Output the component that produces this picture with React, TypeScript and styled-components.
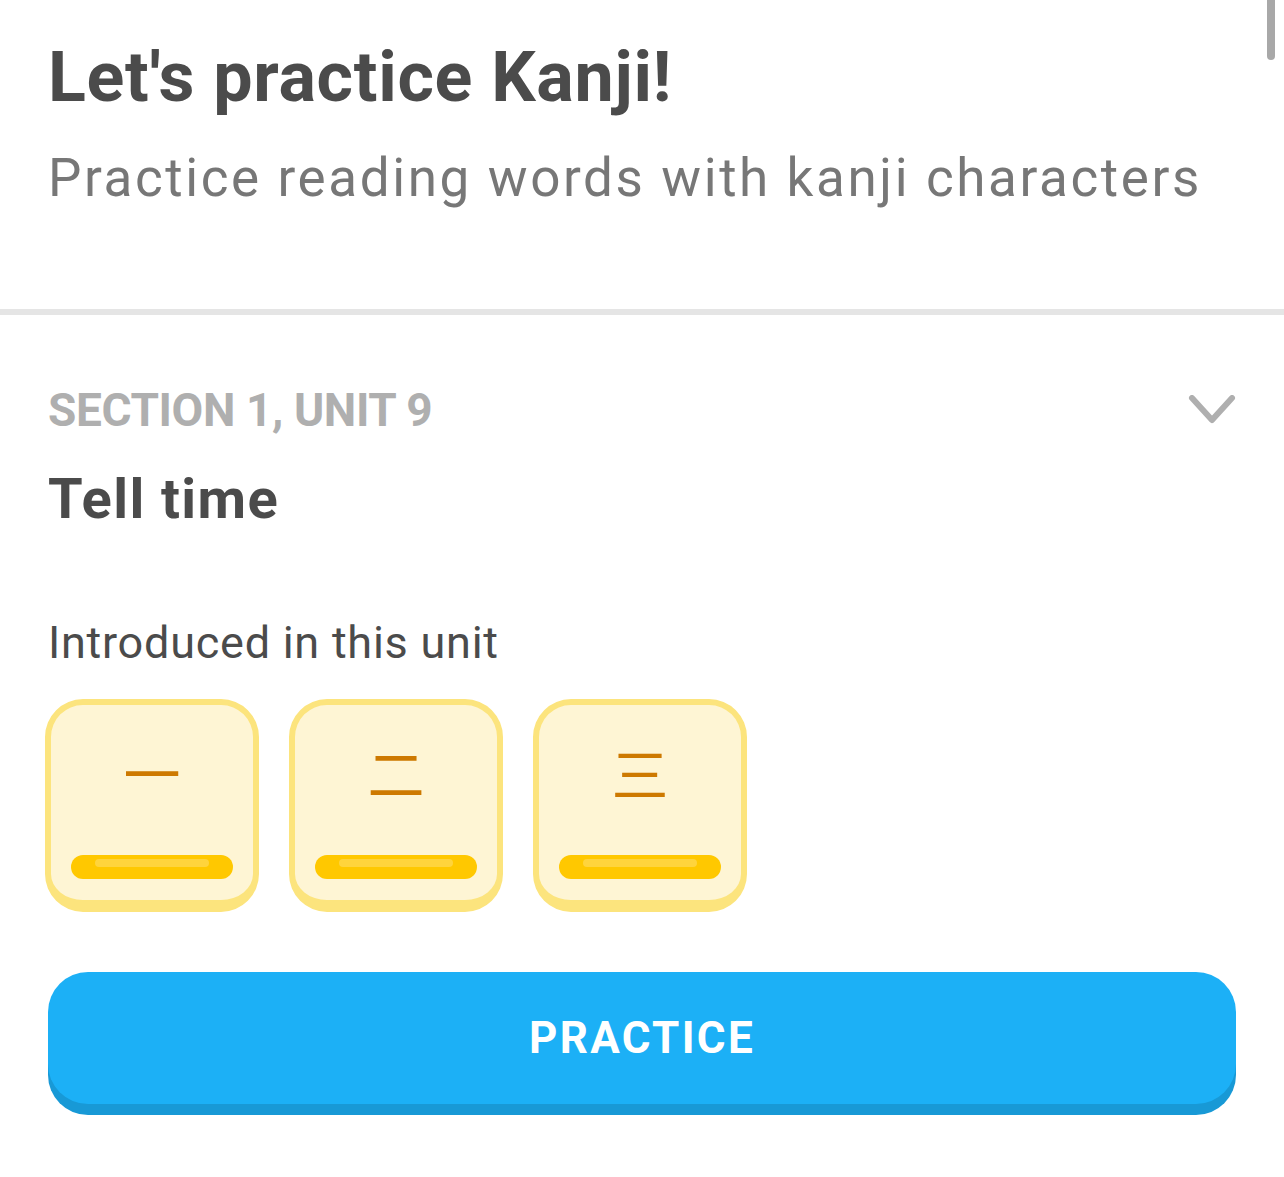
import React from "react";
import styled, { createGlobalStyle } from "styled-components";

const GlobalStyle = createGlobalStyle`
  html, body {
    margin: 0;
    padding: 0;
    background: #ffffff;
  }
  body {
    font-family: Roboto, "Noto Sans", "Liberation Sans", sans-serif;
  }
`;

const Page = styled.div`
  position: relative;
  width: 1284px;
  min-height: 1177px;
  background: #ffffff;
  overflow: hidden;
`;

const ScrollThumb = styled.div`
  position: absolute;
  top: -12px;
  right: 9px;
  width: 8px;
  height: 72px;
  border-radius: 4px;
  background: #a8a8a8;
`;

const Header = styled.header`
  padding: 35px 48px 99px;
`;

const Title = styled.h1`
  margin: 0;
  font-size: 70px;
  line-height: 84px;
  font-weight: 700;
  color: #4b4b4b;
  letter-spacing: 0.7px;
`;

const Subtitle = styled.p`
  margin: 27px 0 0;
  font-size: 53px;
  line-height: 64px;
  font-weight: 400;
  color: #777777;
  letter-spacing: 2.6px;
`;

const Divider = styled.hr`
  margin: 0;
  border: none;
  height: 6px;
  background: #e5e5e5;
`;

const Content = styled.section`
  padding: 67px 48px 60px;
  display: flex;
  flex-direction: column;
`;

const SectionRow = styled.div`
  display: flex;
  align-items: center;
  justify-content: space-between;
`;

const SectionLabel = styled.div`
  font-size: 46px;
  line-height: 56px;
  font-weight: 700;
  color: #afafaf;
  letter-spacing: -0.4px;
`;

const Chevron = styled.svg`
  width: 48px;
  height: 30px;
  display: block;
`;

const UnitTitle = styled.h2`
  margin: 27px 0 0;
  font-size: 56px;
  line-height: 68px;
  font-weight: 700;
  color: #4b4b4b;
  letter-spacing: 1.4px;
`;

const IntroLabel = styled.div`
  margin-top: 82px;
  font-size: 45px;
  line-height: 56px;
  font-weight: 400;
  color: #4b4b4b;
  letter-spacing: 0.75px;
`;

const CardRow = styled.div`
  margin: 28px 0 0 -3px;
  display: flex;
  gap: 30px;
`;

const KanjiCard = styled.div`
  box-sizing: border-box;
  width: 214px;
  height: 213px;
  border: 6px solid #fce47d;
  border-bottom-width: 12px;
  border-radius: 38px;
  background: #fef5d4;
  display: flex;
  flex-direction: column;
  align-items: center;
`;

const GlyphArea = styled.div`
  box-sizing: border-box;
  height: 150px;
  padding-bottom: 17px;
  display: flex;
  align-items: center;
  justify-content: center;
`;

const Glyph = styled.span`
  font-family: "Noto Sans CJK JP", "Noto Sans CJK SC", sans-serif;
  font-size: 57px;
  line-height: 1;
  font-weight: 400;
  color: #cd7900;
`;

const ProgressBar = styled.div`
  width: 162px;
  height: 24px;
  border-radius: 12px;
  background: #ffc800;
  display: flex;
  justify-content: center;
`;

const ProgressShine = styled.div`
  margin-top: 4px;
  width: 114px;
  height: 8px;
  border-radius: 4px;
  background: #ffd43c;
`;

const PracticeButton = styled.button`
  margin-top: 60px;
  width: 100%;
  height: 132px;
  border: none;
  border-radius: 40px;
  background: #1cb0f6;
  box-shadow: 0 11px 0 #1899d6;
  color: #ffffff;
  font-family: Roboto, "Noto Sans", sans-serif;
  font-size: 44px;
  font-weight: 700;
  letter-spacing: 2.3px;
  text-transform: uppercase;
  cursor: pointer;
  display: flex;
  align-items: center;
  justify-content: center;
  padding: 0;
`;

const kanji = ["一", "二", "三"];

export default function App() {
  return (
    <>
      <GlobalStyle />
      <Page>
        <ScrollThumb />
        <Header>
          <Title>Let's practice Kanji!</Title>
          <Subtitle>Practice reading words with kanji characters</Subtitle>
        </Header>
        <Divider />
        <Content>
          <SectionRow>
            <SectionLabel>SECTION 1, UNIT 9</SectionLabel>
            <Chevron viewBox="0 0 48 30" aria-hidden="true">
              <polyline
                points="4,3 24,25 44,3"
                fill="none"
                stroke="#afafaf"
                strokeWidth="6"
                strokeLinecap="round"
                strokeLinejoin="round"
              />
            </Chevron>
          </SectionRow>
          <UnitTitle>Tell time</UnitTitle>
          <IntroLabel>Introduced in this unit</IntroLabel>
          <CardRow>
            {kanji.map((k) => (
              <KanjiCard key={k}>
                <GlyphArea>
                  <Glyph>{k}</Glyph>
                </GlyphArea>
                <ProgressBar>
                  <ProgressShine />
                </ProgressBar>
              </KanjiCard>
            ))}
          </CardRow>
          <PracticeButton>Practice</PracticeButton>
        </Content>
      </Page>
    </>
  );
}
